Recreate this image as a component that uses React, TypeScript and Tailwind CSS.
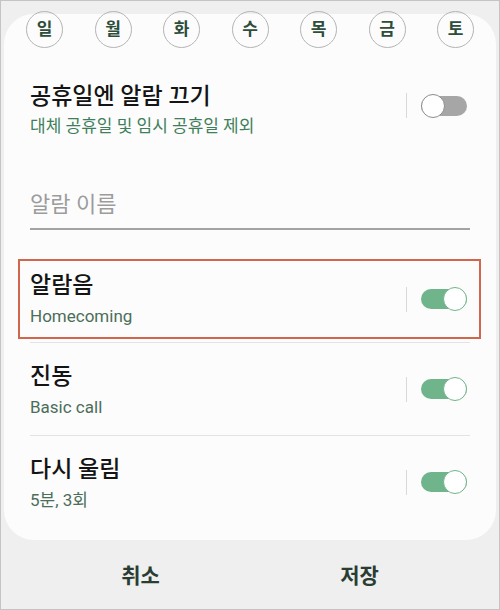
import React from 'react';

interface SettingRow {
  title: string;
  subtitle: string;
  on: boolean;
}

const days = ['일', '월', '화', '수', '목', '금', '토'];

const Toggle: React.FC<{ on: boolean }> = ({ on }) => (
  <div className="flex items-center">
    <div className="w-px h-[25px] bg-[#d9d9d9]" />
    <div className="relative ml-[14px] mr-[3px] w-[46px] h-[24px] flex items-center">
      <div className={`w-full h-[20px] rounded-full ${on ? 'bg-[#70b48b]' : 'bg-[#a6a6a6]'}`} />
      <div
        className={`absolute top-0 w-[24px] h-[24px] rounded-full bg-white border-[1.5px] ${
          on ? 'right-0 border-[#70b48b]' : 'left-0 border-[#8c8c8c]'
        }`}
      />
    </div>
  </div>
);

const App: React.FC = () => {
  const rows: SettingRow[] = [
    { title: '진동', subtitle: 'Basic call', on: true },
    { title: '다시 울림', subtitle: '5분, 3회', on: true }
  ];

  return (
    <div className="w-[500px] h-[610px] bg-[#efefef] border border-[#c4c4c4] flex flex-col overflow-hidden font-['Roboto','Noto_Sans_CJK_KR',sans-serif]">
      {/* Card */}
      <div className="mx-[3px] mt-[13px] h-[526px] bg-[#fcfcfc] rounded-[30px]">
        {/* Day selector */}
        <div className="-mt-[3px] pl-[22px] pr-[22px] flex justify-between">
          {days.map(day => (
            <div
              key={day}
              className="w-[37px] h-[37px] rounded-full border border-[#b4b4b4] flex items-center justify-center text-[17px] font-bold text-[#2e4d3a]"
            >
              {day}
            </div>
          ))}
        </div>

        <div className="px-[26px]">
          {/* Holiday row */}
          <div className="mt-[34px] flex items-start justify-between">
            <div>
              <div className="text-[23px] leading-[30px] font-medium text-[#141414]">공휴일엔 알람 끄기</div>
              <div className="mt-[3px] text-[17px] leading-[22px] text-[#3f805b]">대체 공휴일 및 임시 공휴일 제외</div>
            </div>
            <div className="mt-[11px]">
              <Toggle on={false} />
            </div>
          </div>

          {/* Alarm name */}
          <div className="mt-[54px] text-[22px] leading-[28px] text-[#9c9c9c]">알람 이름</div>
          <div className="mt-[9px] h-[2px] bg-[#a3a3a3]" />

          {/* Alarm sound (highlighted) */}
          <div className="mt-[29px] -ml-[12px] -mr-[11px] pl-[10px] pr-[9px] h-[80px] border-2 border-[#d0674d] flex items-center justify-between">
            <div>
              <div className="text-[23px] leading-[30px] font-medium text-[#141414]">알람음</div>
              <div className="mt-[4px] text-[17px] leading-[22px] text-[#4b6e59]">Homecoming</div>
            </div>
            <Toggle on={true} />
          </div>

          {rows.map((row, index) => (
            <div key={index}>
              <div className={`h-px bg-[#e3e3e3] ${index === 0 ? 'mt-[3px]' : ''}`} />
              <div className="h-[92px] flex items-center justify-between">
                <div className="mt-[2px]">
                  <div className="text-[23px] leading-[30px] font-medium text-[#141414]">{row.title}</div>
                  <div className="mt-[4px] text-[17px] leading-[22px] text-[#4b6e59]">{row.subtitle}</div>
                </div>
                <Toggle on={row.on} />
              </div>
            </div>
          ))}
        </div>
      </div>

      {/* Bottom buttons */}
      <div className="flex-1 px-[30px] pt-[4px] flex items-center">
        <button className="flex-1 text-center text-[21px] font-bold text-[#2b3d32]">취소</button>
        <button className="flex-1 text-center text-[21px] font-bold text-[#2b3d32]">저장</button>
      </div>
    </div>
  );
};

export default App;
